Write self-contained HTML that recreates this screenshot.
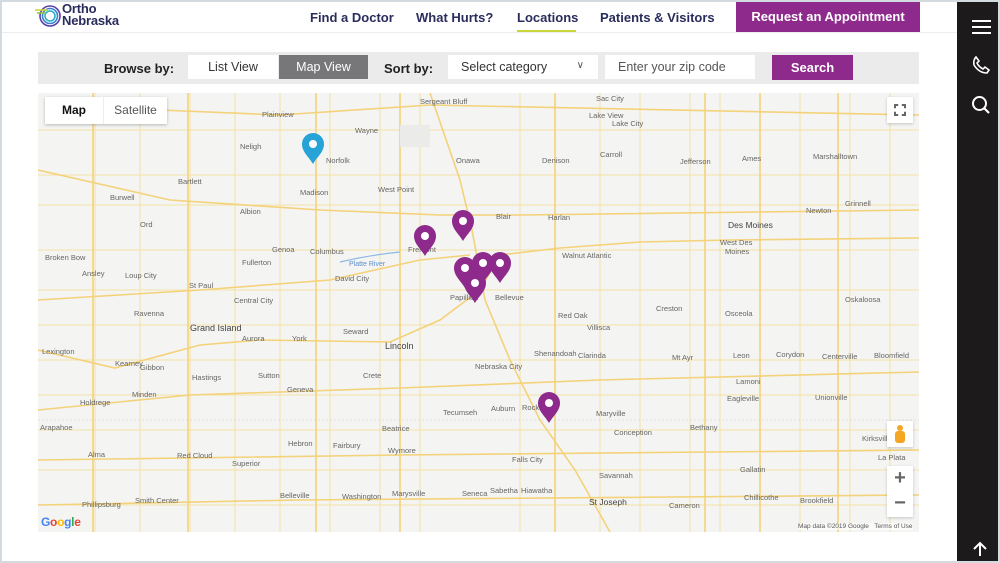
<!DOCTYPE html>
<html><head><meta charset="utf-8"><style>
*{margin:0;padding:0;box-sizing:border-box}
body{width:1000px;height:563px;overflow:hidden;background:#fff;font-family:"Liberation Sans",sans-serif;position:relative}
.frame{position:absolute;inset:0;border:2px solid #d3dbe0;pointer-events:none;z-index:9}
.side{position:absolute;left:957px;top:0;width:43px;height:563px;background:#1c1a1a}
.nav{position:absolute;top:10px;font-weight:bold;font-size:13px;color:#2a2d5c}
.abs{position:absolute}
.fb{position:absolute;left:38px;top:52px;width:881px;height:32px;background:#ebebeb}
.lbl{position:absolute;top:61px;font-weight:bold;font-size:13px;color:#222}
.box{position:absolute;top:55px;height:24px;background:#fff;font-size:12.5px;color:#333;line-height:24px}
.map{position:absolute;left:38px;top:93px;width:881px;height:439px;background:#f4f4f2;overflow:hidden}
.map text{font-family:"Liberation Sans",sans-serif;font-size:7.5px;fill:#666}
</style></head><body>
<div class="frame"></div>
<!-- logo -->
<svg class="abs" style="left:34px;top:4px" width="30" height="24" viewBox="0 0 30 24">
<g fill="none" stroke-width="1.6">
<circle cx="16" cy="12" r="10" stroke="#5a3fa8"/><circle cx="16" cy="12" r="7.5" stroke="#3a7fd0"/><circle cx="16" cy="12" r="5" stroke="#2bb0c8"/>
<path d="M1 6 H14" stroke="#c9d63a"/><path d="M3 9 H12" stroke="#8ec74a"/></g></svg>
<div class="abs" style="left:62px;top:3px;font-size:13px;line-height:12px;color:#2a2d5c;font-weight:bold;letter-spacing:-.2px">Ortho<br>Nebraska</div>
<div class="nav" style="left:310px">Find a Doctor</div>
<div class="nav" style="left:416px">What Hurts?</div>
<div class="nav" style="left:517px">Locations</div>
<div class="abs" style="left:517px;top:30px;width:59px;height:2px;background:#c9d63a"></div>
<div class="nav" style="left:600px">Patients &amp; Visitors</div>
<div class="abs" style="left:736px;top:2px;width:184px;height:30px;background:#8e2a8b;color:#fff;font-weight:bold;font-size:13px;text-align:center;line-height:30px">Request an Appointment</div>
<div class="abs" style="left:0;top:32px;width:957px;height:1px;background:#eee"></div>
<div class="side">
<div class="abs" style="left:15px;top:20px;width:19px;height:2px;background:#fff;box-shadow:0 6px 0 #fff,0 12px 0 #fff"></div>
<svg class="abs" style="left:14px;top:55px" width="20" height="20" viewBox="0 0 20 20"><path d="M5 2 L8 6 L6 8 Q8 12 12 14 L14 12 L18 15 L16 18 Q8 18 3 10 Q2 5 5 2Z" fill="none" stroke="#fff" stroke-width="1.6"/></svg>
<svg class="abs" style="left:14px;top:95px" width="20" height="20" viewBox="0 0 20 20"><circle cx="8.5" cy="8.5" r="6.5" fill="none" stroke="#fff" stroke-width="2"/><path d="M13 13 L18 18" stroke="#fff" stroke-width="2.2"/></svg>
<svg class="abs" style="left:15px;top:541px" width="16" height="16" viewBox="0 0 16 16"><path d="M8 15 V2 M2 8 L8 2 L14 8" fill="none" stroke="#fff" stroke-width="2"/></svg>
</div>
<div class="fb"></div>
<div class="lbl" style="left:104px">Browse by:</div>
<div class="box" style="left:188px;width:90px;text-align:center">List View</div>
<div class="box" style="left:279px;width:89px;text-align:center;background:#77777a;color:#fff">Map View</div>
<div class="lbl" style="left:384px">Sort by:</div>
<div class="box" style="left:448px;width:150px;padding-left:13px">Select category<span style="position:absolute;right:14px;top:-1px;font-size:10px;color:#555">&#8744;</span></div>
<div class="box" style="left:605px;width:150px;padding-left:13px;color:#555">Enter your zip code</div>
<div class="abs" style="left:772px;top:55px;width:81px;height:25px;background:#8e2a8b;color:#fff;font-weight:bold;font-size:13px;text-align:center;line-height:25px">Search</div>

<div class="map">
<svg width="881" height="439" viewBox="38 93 881 439">
<g stroke="#f5e2a8" stroke-width="1" fill="none">
<path d="M38 130 H919 M38 175 H919 M38 205 H919 M38 250 H919 M38 290 H919 M38 325 H919 M38 360 H919 M38 395 H919 M38 430 H919 M38 470 H919 M38 505 H919"/>
<path d="M95 93 V532 M140 93 V532 M190 93 V532 M235 93 V532 M280 93 V532 M330 93 V532 M380 93 V532 M420 93 V532 M520 93 V532 M600 93 V532 M640 93 V532 M690 93 V532 M720 93 V532 M800 93 V532 M850 93 V532 M890 93 V532"/>
</g>
<g stroke="#f4d27a" stroke-width="1.6" fill="none">
<path d="M38 350 L115 368 L200 345 L260 340 L390 342 L440 320 L480 290 L500 255 L560 248 L640 242 L730 240 L919 238"/>
<path d="M430 93 L460 180 L472 230 L485 300 L510 360 L540 420 L575 470 L610 532"/>
<path d="M760 93 V532"/>
<path d="M93 93 V532 M188 93 V532 M316 93 V532 M400 93 V532 M555 93 V532 M705 93 V532 M838 93 V532"/>
<path d="M38 170 L170 200 L320 210 L440 215 L520 215 L919 210"/>
<path d="M38 300 L200 290 L330 280 L420 260 L470 255"/>
<path d="M38 410 L190 395 L400 388 L600 380 L919 372"/>
<path d="M38 460 L400 455 L919 450"/>
<path d="M38 505 L300 500 L919 495"/>
<path d="M160 110 L280 115 L430 105 L919 115"/>
</g>
<path d="M38 420 H919" stroke="#ccc" stroke-width=".6" stroke-dasharray="2 2"/>
<text x="262" y="117">Plainview</text><text x="240" y="149">Neligh</text><text x="326" y="163">Norfolk</text>
<text x="355" y="133">Wayne</text><text x="420" y="104">Sergeant Bluff</text><text x="300" y="195">Madison</text>
<text x="378" y="192">West Point</text><text x="178" y="184">Bartlett</text><text x="110" y="200">Burwell</text>
<text x="240" y="214">Albion</text><text x="140" y="227">Ord</text><text x="272" y="252">Genoa</text>
<text x="310" y="254">Columbus</text><text x="408" y="252">Fremont</text><text x="242" y="265">Fullerton</text>
<text x="45" y="260">Broken Bow</text><text x="82" y="276">Ansley</text><text x="125" y="278">Loup City</text>
<text x="335" y="281">David City</text><text x="189" y="288">St Paul</text><text x="234" y="303">Central City</text>
<text x="134" y="316">Ravenna</text><text x="190" y="331" style="font-size:9px;fill:#444">Grand Island</text>
<text x="343" y="334">Seward</text><text x="385" y="349" style="font-size:9px;fill:#444">Lincoln</text>
<text x="242" y="341">Aurora</text><text x="292" y="341">York</text><text x="42" y="354">Lexington</text>
<text x="115" y="366">Kearney</text><text x="140" y="370">Gibbon</text><text x="192" y="380">Hastings</text>
<text x="258" y="378">Sutton</text><text x="287" y="392">Geneva</text><text x="363" y="378">Crete</text>
<text x="132" y="397">Minden</text><text x="80" y="405">Holdrege</text><text x="40" y="430">Arapahoe</text>
<text x="443" y="415">Tecumseh</text><text x="382" y="431">Beatrice</text><text x="88" y="457">Alma</text>
<text x="288" y="446">Hebron</text><text x="333" y="448">Fairbury</text><text x="388" y="453">Wymore</text>
<text x="177" y="458">Red Cloud</text><text x="232" y="466">Superior</text>
<text x="135" y="503">Smith Center</text><text x="82" y="507">Phillipsburg</text><text x="280" y="498">Belleville</text>
<text x="342" y="499">Washington</text><text x="392" y="496">Marysville</text><text x="462" y="496">Seneca</text>
<text x="596" y="101">Sac City</text><text x="589" y="118">Lake View</text><text x="612" y="126">Lake City</text>
<text x="542" y="163">Denison</text><text x="600" y="157">Carroll</text><text x="680" y="164">Jefferson</text>
<text x="742" y="161">Ames</text><text x="813" y="159">Marshalltown</text><text x="456" y="163">Onawa</text>
<text x="548" y="220">Harlan</text><text x="496" y="219">Blair</text><text x="728" y="228" style="font-size:8.5px;fill:#444">Des Moines</text>
<text x="720" y="245">West Des</text><text x="725" y="254">Moines</text><text x="806" y="213">Newton</text>
<text x="845" y="206">Grinnell</text><text x="562" y="258">Walnut Atlantic</text><text x="450" y="300">Papillion</text>
<text x="495" y="300">Bellevue</text><text x="558" y="318">Red Oak</text><text x="587" y="330">Villisca</text>
<text x="656" y="311">Creston</text><text x="725" y="316">Osceola</text><text x="845" y="302">Oskaloosa</text>
<text x="534" y="356">Shenandoah</text><text x="578" y="358">Clarinda</text><text x="672" y="360">Mt Ayr</text>
<text x="733" y="358">Leon</text><text x="776" y="357">Corydon</text><text x="822" y="359">Centerville</text>
<text x="874" y="358">Bloomfield</text><text x="475" y="369">Nebraska City</text><text x="522" y="410">Rock Port</text>
<text x="596" y="416">Maryville</text><text x="614" y="435">Conception</text><text x="727" y="401">Eagleville</text>
<text x="815" y="400">Unionville</text><text x="690" y="430">Bethany</text><text x="491" y="411">Auburn</text>
<text x="512" y="462">Falls City</text><text x="599" y="478">Savannah</text><text x="589" y="505" style="font-size:8.5px;fill:#444">St Joseph</text>
<text x="521" y="493">Hiawatha</text><text x="490" y="493">Sabetha</text><text x="744" y="500">Chillicothe</text>
<text x="800" y="503">Brookfield</text><text x="862" y="441">Kirksville</text><text x="669" y="508">Cameron</text>
<text x="740" y="472">Gallatin</text><text x="736" y="384">Lamoni</text>
<text x="878" y="460">La Plata</text>
<path d="M340 262 Q370 255 400 252" stroke="#8db8e6" stroke-width="1.2" fill="none"/>
<text x="349" y="266" style="fill:#5b8fd0;font-size:7px">Platte River</text>
<rect x="400" y="125" width="30" height="22" fill="#ebebea"/>
</svg>
<svg class="abs" style="left:0;top:0" width="881" height="439" viewBox="38 93 881 439">
<defs><path id="p" d="M0 0 C-4 -7 -11 -12 -11 -20 A11 11 0 1 1 11 -20 C11 -12 4 -7 0 0Z"/></defs>
<g fill="#8e2a8b">
<use href="#p" x="425" y="256"/><use href="#p" x="463" y="241"/><use href="#p" x="500" y="283"/>
<use href="#p" x="483" y="283"/><use href="#p" x="465" y="288"/><use href="#p" x="475" y="303"/><use href="#p" x="549" y="423"/></g>
<use href="#p" x="313" y="164" fill="#27a3d7"/>
<g fill="#fff"><circle cx="425" cy="236" r="4"/><circle cx="463" cy="221" r="4"/><circle cx="500" cy="263" r="4"/>
<circle cx="483" cy="263" r="4"/><circle cx="465" cy="268" r="4"/><circle cx="475" cy="283" r="4"/><circle cx="549" cy="403" r="4"/><circle cx="313" cy="144" r="4"/></g>
</svg>
<div class="abs" style="left:7px;top:4px;width:122px;height:27px;background:#fff;box-shadow:0 1px 3px rgba(0,0,0,.25);font-size:12px;line-height:27px">
<span class="abs" style="left:0;width:58px;text-align:center;font-weight:bold;color:#111">Map</span>
<span class="abs" style="left:58px;width:64px;text-align:center;color:#555;border-left:1px solid #eee">Satellite</span></div>
<div class="abs" style="left:849px;top:4px;width:26px;height:26px;background:#fff;box-shadow:0 1px 3px rgba(0,0,0,.2)">
<div class="abs" style="left:7px;top:7px;width:12px;height:12px;border:2px solid #666;clip-path:polygon(0 0,35% 0,35% 35%,65% 35%,65% 0,100% 0,100% 35%,65% 35%,65% 65%,100% 65%,100% 100%,65% 100%,65% 65%,35% 65%,35% 100%,0 100%,0 65%,35% 65%,35% 35%,0 35%)"></div></div>
<div class="abs" style="left:849px;top:328px;width:26px;height:26px;background:#fff;box-shadow:0 1px 3px rgba(0,0,0,.2)">
<div class="abs" style="left:10px;top:4px;width:6px;height:6px;border-radius:50%;background:#f5a623"></div>
<div class="abs" style="left:8px;top:10px;width:10px;height:12px;border-radius:3px;background:#f5a623"></div></div>
<div class="abs" style="left:849px;top:373px;width:26px;height:51px;background:#fff;box-shadow:0 1px 3px rgba(0,0,0,.2);color:#666;font-size:20px;text-align:center;line-height:25px;font-weight:bold">+<br>&minus;</div>
<div class="abs" style="left:3px;top:422px;font-size:12px;font-weight:bold;letter-spacing:-.3px"><span style="color:#4285f4">G</span><span style="color:#ea4335">o</span><span style="color:#fbbc05">o</span><span style="color:#4285f4">g</span><span style="color:#34a853">l</span><span style="color:#ea4335">e</span></div>
<div class="abs" style="left:760px;top:430px;font-size:6.5px;color:#555;background:rgba(255,255,255,.6)">Map data ©2019 Google &nbsp; Terms of Use</div>
</div>
</body></html>
